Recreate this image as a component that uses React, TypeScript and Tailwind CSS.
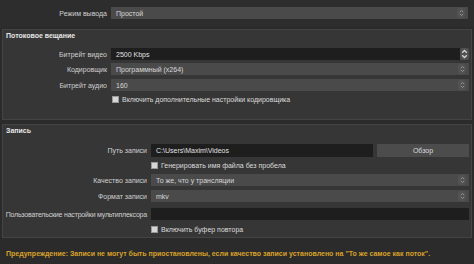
import React from 'react';

const Arrows: React.FC<{ big?: boolean }> = ({ big }) => (
  <div
    className={
      big
        ? 'w-[9px] h-[12px] bg-[#505050] rounded-[2px] flex items-center justify-center'
        : 'w-[8px] h-[10px] bg-[#525252] rounded-[2px] flex items-center justify-center'
    }
  >
    <svg width={big ? 7 : 5} height={big ? 10 : 8} viewBox="0 0 6 8" fill="none">
      <path d="M1 3 L3 1 L5 3" stroke={big ? '#d0d0d0' : '#a8a8a8'} strokeWidth={big ? 1.2 : 0.9} />
      <path d="M1 5 L3 7 L5 5" stroke={big ? '#d0d0d0' : '#a8a8a8'} strokeWidth={big ? 1.2 : 0.9} />
    </svg>
  </div>
);

const Combo: React.FC<{ value: string }> = ({ value }) => (
  <div className="flex-1 h-[12px] bg-[#4a4a4a] flex items-center pl-[5px] pr-[3px]">
    <span className="flex-1 text-[#d8d8d8]">{value}</span>
    <Arrows />
  </div>
);

const Check: React.FC<{ label: string }> = ({ label }) => (
  <div className="flex items-center h-[10px]">
    <div className="w-[7px] h-[7px] bg-[#d6d6d6] border border-[#999] mr-[3px]" />
    <span className="text-[#dcdcdc]">{label}</span>
  </div>
);

const Row: React.FC<{ label: string; w: string; tight?: boolean; children: React.ReactNode }> = ({
  label,
  w,
  tight,
  children,
}) => (
  <div className="flex items-center h-[12px]">
    <div
      className={`${w} shrink-0 text-right pr-[4px] text-[#d0d0d0] whitespace-nowrap ${
        tight ? 'tracking-[-0.2px]' : ''
      }`}
    >
      {label}
    </div>
    {children}
  </div>
);

export default function App() {
  return (
    <div
      className="w-[474px] h-[264px] bg-[#2b2b2b] text-[7px] leading-none text-[#dcdcdc] overflow-hidden flex flex-col"
      style={{ fontFamily: '"Liberation Sans", "DejaVu Sans", sans-serif' }}
    >
      {/* output mode */}
      <div className="h-[27px] pt-[7px] pr-[6px] bg-[#2d2d2d]">
        <Row label="Режим вывода" w="w-[111px]">
          <Combo value="Простой" />
        </Row>
      </div>

      {/* streaming */}
      <div className="mt-[2px] mx-[2px] h-[91px] border border-[#444] bg-[#363636] flex flex-col">
        <div className="h-[10px] pl-[3px] pt-[2px] font-bold text-[#e6e6e6]">Потоковое вещание</div>
        <div className="mt-[8px] flex flex-col pr-[2px]">
          <Row label="Битрейт видео" w="w-[108px]">
            <div className="flex-1 h-[12px] bg-[#1e1e1e] flex items-center pl-[5px] text-[#e0e0e0]">
              2500 Kbps
            </div>
            <Arrows big />
          </Row>
          <div className="mt-[3px]">
            <Row label="Кодировщик" w="w-[108px]">
              <Combo value="Программный (x264)" />
            </Row>
          </div>
          <div className="mt-[4px]">
            <Row label="Битрейт аудио" w="w-[108px]">
              <Combo value="160" />
            </Row>
          </div>
          <div className="mt-[3px] pl-[109px]">
            <Check label="Включить дополнительные настройки кодировщика" />
          </div>
        </div>
      </div>

      {/* recording */}
      <div className="mt-[4px] mx-[2px] h-[114px] border border-[#444] bg-[#363636] flex flex-col">
        <div className="h-[10px] pl-[3px] pt-[2px] font-bold text-[#e6e6e6]">Запись</div>
        <div className="mt-[9px] flex flex-col pr-[2px]">
          <div className="flex items-center h-[13px]">
            <div className="w-[148px] text-right pr-[4px] text-[#d0d0d0]">Путь записи</div>
            <div className="w-[222px] h-[13px] bg-[#1e1e1e] flex items-center pl-[5px] text-[#e0e0e0]">
              C:\Users\Maxim\Videos
            </div>
            <div className="ml-[4px] flex-1 h-[13px] bg-[#4c4c4c] flex items-center justify-center text-[#dcdcdc]">
              Обзор
            </div>
          </div>
          <div className="mt-[3px] pl-[148px]">
            <Check label="Генерировать имя файла без пробела" />
          </div>
          <div className="mt-[4px]">
            <Row label="Качество записи" w="w-[148px]">
              <Combo value="То же, что у трансляции" />
            </Row>
          </div>
          <div className="mt-[4px]">
            <Row label="Формат записи" w="w-[148px]">
              <Combo value="mkv" />
            </Row>
          </div>
          <div className="mt-[6px]">
            <Row label="Пользовательские настройки мультиплексора" w="w-[148px]" tight>
              <div className="flex-1 h-[12px] bg-[#1e1e1e]" />
            </Row>
          </div>
          <div className="mt-[4px] pl-[148px]">
            <Check label="Включить буфер повтора" />
          </div>
        </div>
      </div>

      <div className="mt-[12px] pl-[6px] font-bold text-[#d9a22a] whitespace-nowrap">
        Предупреждение: Записи не могут быть приостановлены, если качество записи установлено на "То же самое как поток".
      </div>
    </div>
  );
}
